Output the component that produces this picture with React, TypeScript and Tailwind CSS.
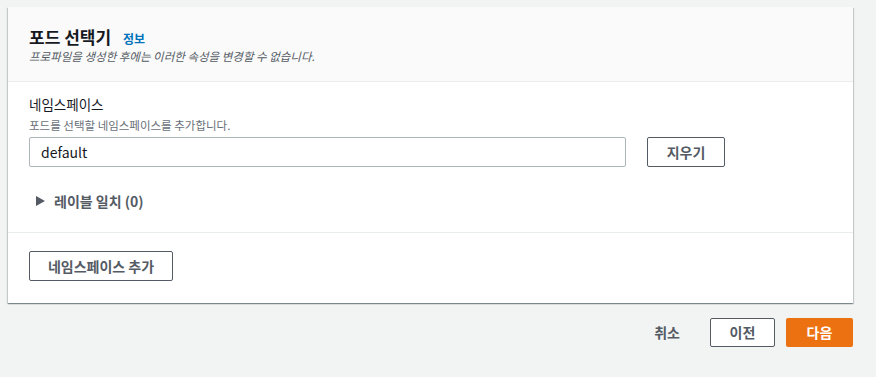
import React from 'react';

const font = { fontFamily: '"Noto Sans CJK KR", "Noto Sans", sans-serif' };

const App: React.FC = () => {
  return (
    <div
      className="w-[876px] h-[377px] bg-[#f2f3f3] pt-[7px] pl-[8px] text-[#16191f] overflow-hidden"
      style={font}
    >
      <div className="w-[845px] bg-white shadow-[0_1px_1px_0_rgba(0,28,36,0.3),1px_1px_1px_0_rgba(0,28,36,0.15),-1px_1px_1px_0_rgba(0,28,36,0.15)]">
        <div className="bg-[#fafafa] border-b border-[#eaeded] pl-[21px] pt-[19px] pb-[17px]">
          <div className="flex items-baseline gap-[12px]">
            <h2 className="text-[17px] leading-[22px] font-bold">포드 선택기</h2>
            <span className="text-[12px] leading-[16px] font-bold text-[#0073bb]">정보</span>
          </div>
          <p className="text-[11.5px] leading-[16px] italic text-[#545b64]">
            프로파일을 생성한 후에는 이러한 속성을 변경할 수 없습니다.
          </p>
        </div>

        <div className="pl-[21px] pr-[20px] pt-[12px] pb-[21px] border-b border-[#eaeded]">
          <div className="text-[13.5px] leading-[20px]">네임스페이스</div>
          <div className="text-[11.5px] leading-[16px] text-[#687078] mt-[3px]">
            포드를 선택할 네임스페이스를 추가합니다.
          </div>
          <div className="flex items-center gap-[21px] mt-[4px]">
            <div className="w-[597px] h-[30px] border border-[#aab7b8] rounded-[2px] flex items-center px-[11px] text-[14px]">
              default
            </div>
            <button className="w-[78px] h-[30px] border border-[#545b64] rounded-[2px] text-[14px] font-bold text-[#545b64] bg-white">
              지우기
            </button>
          </div>
          <div className="flex items-center mt-[24px] h-[20px] pl-[7px]">
            <svg width="9" height="10" viewBox="0 0 9 10" className="mr-[9px]">
              <path d="M0 0 L9 5 L0 10 Z" fill="#545b64" />
            </svg>
            <span className="text-[14px] leading-[20px] font-bold text-[#545b64]">레이블 일치 (0)</span>
          </div>
        </div>

        <div className="pl-[21px] pt-[18px] pb-[22px]">
          <button className="w-[144px] h-[30px] border border-[#545b64] rounded-[2px] text-[14px] font-bold text-[#545b64] bg-white">
            네임스페이스 추가
          </button>
        </div>
      </div>

      <div className="w-[845px] flex justify-end items-center mt-[15px]">
        <button className="text-[14px] font-bold text-[#545b64] mr-[30px]">취소</button>
        <button className="w-[65px] h-[29px] border border-[#545b64] rounded-[2px] text-[14px] font-bold text-[#545b64] bg-white mr-[11px]">
          이전
        </button>
        <button className="w-[67px] h-[29px] rounded-[2px] text-[14px] font-bold text-white bg-[#ec7211]">
          다음
        </button>
      </div>
    </div>
  );
};

export default App;
